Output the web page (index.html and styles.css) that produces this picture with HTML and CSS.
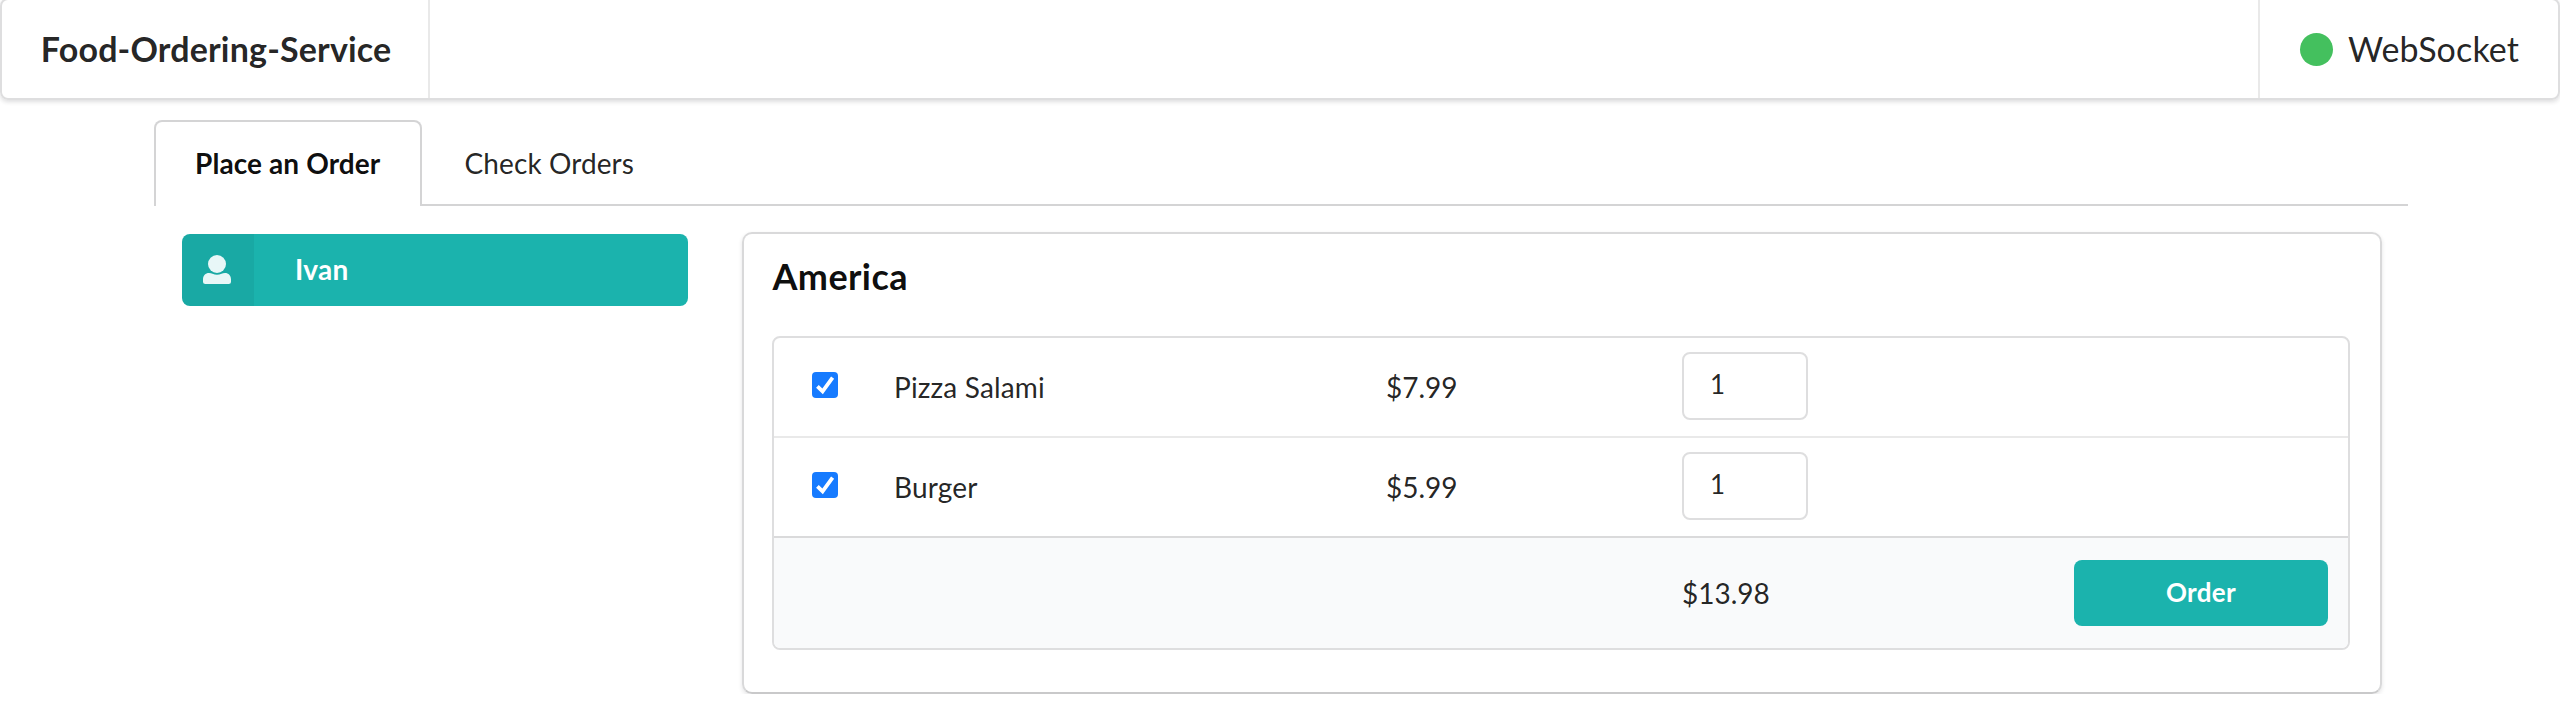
FILE: index.html
```html
<!DOCTYPE html>
<html lang="en">
<head>
<meta charset="utf-8">
<title>Food-Ordering-Service</title>
<link rel="stylesheet" href="styles.css">
</head>
<body>
<header class="topbar">
  <div class="brand">Food-Ordering-Service</div>
  <div class="status"><span class="dot"></span><span>WebSocket</span></div>
</header>
<main class="container">
  <nav class="tabs">
    <a class="tab active">Place an Order</a>
    <a class="tab">Check Orders</a>
  </nav>
  <div class="columns">
    <button class="user">
      <span class="user-icon">
        <svg width="28" height="29" viewBox="0 0 28 29"><circle cx="14" cy="9" r="9"/><path d="M0 24.5C0 20.5 2.500 18 6 18Q8 18 9.500 18.700Q14 20.600 18.500 18.700Q20 18 22 18C25.500 18 28 20.500 28 24.500V26.500Q28 29 25.500 29H2.500Q0 29 0 26.500Z"/></svg>
      </span>
      <span class="user-name">Ivan</span>
    </button>
    <section class="card">
      <h2 class="title">America</h2>
      <div class="table">
        <div class="row">
          <span class="check"><svg width="26" height="26" viewBox="0 0 26 26"><path d="M5.400 14.400L10.600 19.400L20.600 5.600"/></svg></span>
          <span class="name">Pizza Salami</span>
          <span>$7.99</span>
          <input class="qty" type="text" value="1">
        </div>
        <div class="row">
          <span class="check"><svg width="26" height="26" viewBox="0 0 26 26"><path d="M5.400 14.400L10.600 19.400L20.600 5.600"/></svg></span>
          <span class="name">Burger</span>
          <span>$5.99</span>
          <input class="qty" type="text" value="1">
        </div>
        <div class="row footer">
          <span class="total">$13.98</span>
          <button class="order">Order</button>
        </div>
      </div>
    </section>
  </div>
</main>
</body>
</html>
```
FILE: styles.css
```css
* { box-sizing: border-box; }
body {
  margin: 0;
  background: #fff;
  color: rgba(0, 0, 0, .87);
  font-family: Lato, "Liberation Sans", sans-serif;
  font-size: 28px;
  line-height: 36px;
}
button, input { font-family: inherit; color: inherit; margin: 0; }
.topbar {
  display: flex;
  justify-content: space-between;
  height: 102px;
  margin-top: -2px;
  border: 2px solid #dededf;
  border-radius: 8px;
  box-shadow: 0 2px 4px rgba(34, 36, 38, .15);
  font-size: 34px;
}
.brand, .status { display: flex; align-items: center; padding: 0 38.860px; }
.brand {
  width: 428px;
  border-right: 2px solid #e9e9e9;
  font-weight: 700;
  letter-spacing: .17px;
  white-space: nowrap;
}
.status { width: 300px; padding-left: 39.500px; gap: 15.500px; border-left: 2px solid #e9e9e9; letter-spacing: .12px; }
.dot { width: 33px; height: 33px; border-radius: 50%; background: #44c05e; flex: none; }
.container { width: 2254px; margin: 20px 0 0 154px; }
.tabs { display: flex; height: 86px; border-bottom: 2px solid #d4d4d5; }
.tab { display: flex; align-items: center; padding: 2px 42.500px 0; letter-spacing: .1px; }
.active {
  width: 268px;
  height: 86px;
  padding: 0 0 2px 39px;
  background: #fff;
  border: 2px solid #d4d4d5;
  border-bottom: 0;
  border-radius: 8px 8px 0 0;
  color: rgba(0, 0, 0, .95);
  font-weight: 700;
}
.columns {
  display: grid;
  grid-template-columns: 506px 1640px;
  gap: 54px;
  align-items: start;
  padding: 26px 0 0 28px;
}
.user {
  display: flex;
  height: 72px;
  margin-top: 2px;
  padding: 0;
  border: 0;
  border-radius: 8px;
  background: #1bb3ad;
  color: #fff;
  font-size: 28px;
  font-weight: 700;
  line-height: 70px;
  overflow: hidden;
}
.user-icon { width: 72px; height: 72px; padding: 21px 21px 0; background: rgba(0, 0, 0, .05); }
.user-icon svg { display: block; fill: #e8f7f7; }
.user-name { padding-left: 41px; letter-spacing: .3px; }
.card {
  height: 462px;
  padding: 24px 30px 0 28px;
  border: 2px solid #d9d9da;
  border-bottom-color: #c9c9ca;
  border-radius: 10px;
  box-shadow: 0 2px 4px rgba(34, 36, 38, .12);
}
.title {
  height: 78px;
  margin: 0;
  padding-left: .5px;
  color: rgba(0, 0, 0, .95);
  font-size: 36px;
  line-height: 36px;
  letter-spacing: .4px;
}
.table {
  height: 314px;
  border: 2px solid #dededf;
  border-radius: 8px;
  overflow: hidden;
}
.row {
  display: grid;
  grid-template-columns: 82px 492px 296px 392px 254px;
  align-items: center;
  height: 100px;
  padding-left: 38px;
  border-bottom: 2px solid #e9e9e9;
}
.row:nth-child(2) { border-bottom-color: #dadadb; }
.check { width: 26px; height: 26px; margin-bottom: 4px; border-radius: 4px; background: #167bff; }
.check svg { display: block; fill: none; stroke: #fff; stroke-width: 3.800; }
.name { letter-spacing: .15px; }
.qty {
  width: 126px;
  height: 68px;
  margin-bottom: 2px;
  padding: 0 26px 4px;
  border: 2px solid #dededf;
  border-radius: 8px;
  background: #fff;
  font-size: 26px;
}
.footer { height: 110px; border: 0; background: #f9fafb; }
.total { grid-column: 4; }
.order {
  height: 66px;
  padding: 0 0 2px;
  border: 0;
  border-radius: 8px;
  background: #1bb3ad;
  color: #fff;
  font-size: 26px;
  font-weight: 700;
  letter-spacing: .3px;
}
```
